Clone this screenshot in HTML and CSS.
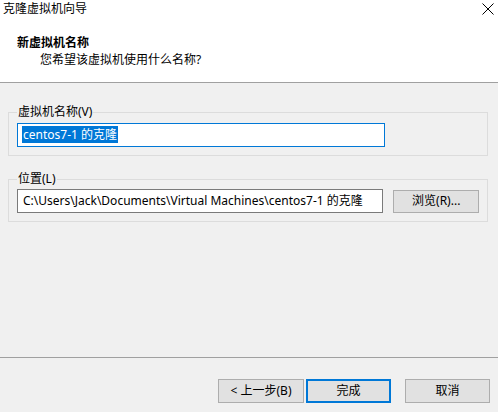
FILE: index.html
```html
<!DOCTYPE html>
<html lang="zh-CN">
<head>
<meta charset="utf-8">
<title>克隆虚拟机向导</title>
<link rel="stylesheet" href="styles.css">
</head>
<body>
<div class="wizard">
  <header class="wizard-head">
    <div class="titlebar">
      <span class="title">克隆虚拟机向导</span>
      <svg class="close" width="12" height="12" viewBox="0 0 12 12" aria-hidden="true">
        <path d="M0.5 0.5 L11.5 11.5 M11.5 0.5 L0.5 11.5" stroke="#000" stroke-width="1" fill="none"/>
      </svg>
    </div>
    <div class="step-title">新虚拟机名称</div>
    <div class="step-desc">您希望该虚拟机使用什么名称?</div>
  </header>

  <main class="wizard-body">
    <fieldset class="group group-name">
      <legend>虚拟机名称(V)</legend>
      <div class="textbox focused"><span class="sel">centos7-1 的克隆</span></div>
    </fieldset>

    <fieldset class="group group-path">
      <legend>位置(L)</legend>
      <div class="row">
        <div class="textbox">C:\Users\Jack\Documents\Virtual Machines\centos7-1 的克隆</div>
        <button class="btn browse" type="button">浏览(R)...</button>
      </div>
    </fieldset>
  </main>

  <footer class="wizard-foot">
    <button class="btn back" type="button">&lt; 上一步(B)</button>
    <button class="btn default" type="button">完成</button>
    <button class="btn cancel" type="button">取消</button>
  </footer>
</div>
</body>
</html>
```
FILE: styles.css
```css
html, body {
  margin: 0;
  padding: 0;
}

body {
  width: 498px;
  height: 412px;
  overflow: hidden;
  background: #f0f0f0;
  font-family: "Noto Sans", "Noto Sans CJK SC", sans-serif;
  font-size: 12px;
  line-height: 16px;
  color: #000;
}

.wizard {
  display: flex;
  flex-direction: column;
  height: 412px;
}

/* white banner with the step heading */
.wizard-head {
  background: #fff;
  height: 83px;
  box-sizing: border-box;
  border-bottom: 1px solid #a0a0a0;
  flex: none;
}

.titlebar {
  display: flex;
  justify-content: space-between;
  align-items: flex-start;
  padding: 1px 4px 0 3px;
  height: 16px;
}

.close {
  margin-top: 2px;
}

.step-title {
  font-weight: bold;
  margin: 18px 0 0 17px;
}

.step-desc {
  margin: 1px 0 0 40px;
}

/* form area */
.wizard-body {
  flex: 1;
  padding: 21px 10px 0 8px;
}

.group {
  margin: 0;
  border: 1px solid #dcdcdc;
  padding: 3px 8px 8px 8px;
  min-width: 0;
}

.group legend {
  padding: 0 1px;
  margin-left: 0;
}

.group-path {
  margin-top: 15px;
  padding-top: 2px;
}

.row {
  display: flex;
  align-items: center;
  gap: 10px;
}

.textbox {
  box-sizing: border-box;
  width: 368px;
  height: 24px;
  background: #fff;
  border: 1px solid #7a7a7a;
  padding: 3px 0 0 5px;
  white-space: nowrap;
  overflow: hidden;
}

.textbox.focused {
  border-color: #0078d7;
  padding-left: 4px;
}

.sel {
  background: #0078d7;
  color: #fff;
  padding: 0 1px;
}

.btn {
  box-sizing: border-box;
  width: 85px;
  height: 24px;
  background: #e1e1e1;
  border: 1px solid #adadad;
  font: inherit;
  color: #000;
  padding: 0;
}

.browse {
  width: 86px;
  height: 23px;
}

/* bottom button strip */
.wizard-foot {
  flex: none;
  height: 55px;
  box-sizing: border-box;
  border-top: 1px solid #a0a0a0;
  display: flex;
  justify-content: flex-end;
  align-items: flex-start;
  padding: 21px 8px 0 0;
}

.btn.back {
  width: 86px;
}

.btn.default {
  margin-left: 2px;
  border: 1px solid #0078d7;
  box-shadow: inset 0 0 0 1px #0078d7;
}

.btn.cancel {
  margin-left: 14px;
}
```
